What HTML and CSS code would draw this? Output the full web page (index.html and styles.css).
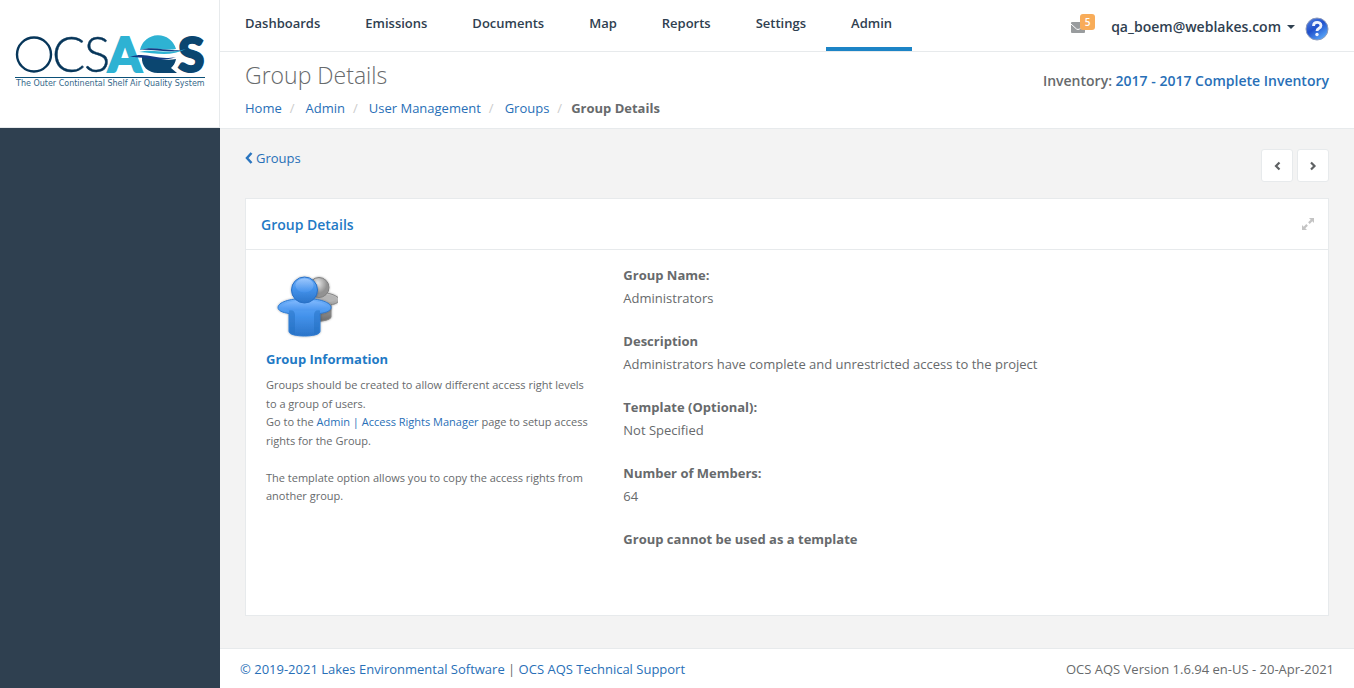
FILE: index.html
```html
<!DOCTYPE html>
<html lang="en-US">
<head>
<meta charset="utf-8">
<meta name="viewport" content="width=device-width, initial-scale=1">
<title>Group Details</title>
<link rel="stylesheet" href="styles.css">
</head>
<body>
<div class="app">
  <aside class="sidebar">
    <div class="brand">
      <svg class="logo" viewBox="0 0 190 56" role="img" aria-label="OCS AQS, The Outer Continental Shelf Air Quality System">
        <circle cx="19" cy="19.500" r="17" fill="none" stroke="#07365a" stroke-width="2.400"/>
        <text class="logo-thin" x="37" y="37">C</text>
        <text class="logo-thin" x="69" y="37">S</text>
        <text class="logo-heavy logo-aqua" x="93" y="37">A</text>
        <text class="logo-heavy" x="163" y="37">S</text>
        <path fill="#2eb2d3" d="M125 15a18.500 18.500 0 0 1 36-1c-12 2-22-3-36 1z"/>
        <path fill="#2eb2d3" d="M124 17c15-4 26 3 47-3-15 8-31 4-47 3z"/>
        <path fill="#0b4670" d="M127 22c13-2 20 5 34 2-1 5-3 7-5 9l6 5h-19c-10 0-17-7-16-16z"/>
        <path fill="#123b85" d="M115 22c17-6 26 4 46 0-15 6-28 0-46 0zM125 15c15-5 28 3 46-1-17 5-30 0-46 1z"/>
        <path stroke="#0b5078" stroke-width="1" d="M0 42.500h190"/>
        <text class="logo-tag" x="1" y="51">The Outer Continental Shelf Air Quality System</text>
      </svg>
    </div>
  </aside>
  <div class="page">
    <header class="topbar">
      <nav class="nav" aria-label="Main">
        <a href="#">Dashboards</a>
        <a href="#">Emissions</a>
        <a href="#">Documents</a>
        <a href="#">Map</a>
        <a href="#">Reports</a>
        <a href="#">Settings</a>
        <a href="#" class="active" aria-current="page">Admin</a>
      </nav>
      <div class="account">
        <a href="#" class="mail" aria-label="5 messages">
          <svg width="14" height="11" viewBox="0 0 14 11"><rect width="14" height="11" rx="1" fill="#999c9e"/><path d="M0 2l5.500 5q1.500 1 3 0L14 2" fill="none" stroke="#fff" stroke-width="1"/></svg>
          <span class="badge">5</span>
        </a>
        <button type="button" class="user">qa_boem@weblakes.com
          <svg width="8" height="4" viewBox="0 0 8 4"><path d="M0 0h8L4 4z" fill="#2f4050"/></svg>
        </button>
        <a href="#" class="help" aria-label="Help">
          <svg width="24" height="24" viewBox="0 0 24 24">
            <defs><linearGradient id="hg" x2=".7" y2="1"><stop offset="0" stop-color="#5a86e0"/><stop offset=".5" stop-color="#1f50cc"/><stop offset="1" stop-color="#5aa8fa"/></linearGradient></defs>
            <circle cx="12" cy="12" r="11" fill="url(#hg)" stroke="#8d9bbb"/>
            <path d="M8.500 9c0-5 7.500-4.500 7.500-.5 0 3-4 2.500-4 5.500" fill="none" stroke="#eef3ff" stroke-width="2.800"/>
            <circle cx="12" cy="17.500" r="1.700" fill="#eef3ff"/>
          </svg>
        </a>
      </div>
    </header>
    <section class="heading">
      <div>
        <h1>Group Details</h1>
        <ol class="crumbs">
          <li><a href="#">Home</a></li>
          <li><a href="#">Admin</a></li>
          <li><a href="#">User Management</a></li>
          <li><a href="#">Groups</a></li>
          <li><strong>Group Details</strong></li>
        </ol>
      </div>
      <p class="inventory">Inventory: <a href="#">2017 - 2017 Complete Inventory</a></p>
    </section>
    <main class="content">
      <div class="tools">
        <a href="#" class="back"><svg width="8" height="12" viewBox="0 0 8 12"><path d="M6.500 1L2 6l4.500 5" fill="none" stroke="#2a75bf" stroke-width="2.500"/></svg>Groups</a>
        <div class="pager">
          <button type="button" aria-label="Previous group"><svg width="8" height="10" viewBox="0 0 8 10"><path d="M6.500 1.500L3 5l3.500 3.500" fill="none" stroke="#5e6163" stroke-width="2.200"/></svg></button>
          <button type="button" aria-label="Next group"><svg width="8" height="10" viewBox="0 0 8 10"><path d="M2 1.500L5.500 5 2 8.500" fill="none" stroke="#5e6163" stroke-width="2.200"/></svg></button>
        </div>
      </div>
      <section class="card">
        <div class="card-head">
          <h2>Group Details</h2>
          <button type="button" class="expand" aria-label="Expand"><svg width="12" height="12" viewBox="0 0 12 12"><path d="M7 0h5v5l-1.700-1.700-2.600 2.600-1.600-1.600 2.600-2.600zM5 12H0V7l1.700 1.700 2.600-2.600 1.600 1.600-2.600 2.600z" fill="#c4c4c4"/></svg></button>
        </div>
        <div class="card-body">
          <div class="info">
            <svg class="people" width="72" height="72" viewBox="0 0 72 72" aria-hidden="true">
              <defs>
                <linearGradient id="b1" x2="0" y2="1"><stop offset="0" stop-color="#70b0fa"/><stop offset=".45" stop-color="#4493ec"/><stop offset="1" stop-color="#2b74c9"/></linearGradient>
                <linearGradient id="b2" x2="0" y2="1"><stop offset="0" stop-color="#b4d4ff"/><stop offset="1" stop-color="#4894ee"/></linearGradient>
                <linearGradient id="b3" x2="0" y2="1"><stop offset="0" stop-color="#86bcff"/><stop offset="1" stop-color="#4894ee"/></linearGradient>
                <linearGradient id="g1" x2="0" y2="1"><stop offset="0" stop-color="#ccc"/><stop offset="1" stop-color="#6c6c6c"/></linearGradient>
                <radialGradient id="g2" cx=".4" cy=".3"><stop offset="0" stop-color="#eee"/><stop offset="1" stop-color="#929292"/></radialGradient>
                <filter id="sh" x="-20%" y="-20%" width="140%" height="140%"><feDropShadow dx="0" dy="0" stdDeviation="1" flood-opacity=".35"/></filter>
              </defs>
              <g transform="translate(1 1.500)">
                <g filter="url(#sh)">
                  <path d="M40 22c12-4 32 1 32 6 0 3-4 5-8 5v13c-2 3-12 5-20 3z" fill="url(#g1)" stroke="#848484"/>
                  <ellipse cx="58" cy="27" rx="11" ry="4" fill="#b5b5b5"/>
                  <circle cx="52" cy="16" r="10" fill="url(#g2)" stroke="#808080"/>
                </g>
                <g filter="url(#sh)">
                  <path d="M11 36c0-5 11-9 26.500-9S64 31 64 36c0 3-4 5-11 6v18c0 6-31 6-31 0V42c-7-1-11-3-11-6z" fill="url(#b1)" stroke="#2f7ad0"/>
                  <path d="M14 36c1-4 11-7 23.500-7S60 32 61 36c-4 2-9 2-12 3H26c-3-1-8-1-12-3z" fill="url(#b3)" opacity=".8"/>
                  <path d="M22 39q6-1 6 5v19l-5-2zM53 39q-6-1-6 5v19l5-2z" fill="#236fc2" opacity=".5"/>
                  <circle cx="37.500" cy="18.500" r="13" fill="url(#b1)" stroke="#2870c6"/>
                  <ellipse cx="37.500" cy="14" rx="9" ry="7" fill="url(#b2)" opacity=".65"/>
                </g>
              </g>
            </svg>
            <h3>Group Information</h3>
            <p>Groups should be created to allow different access right levels to a group of users.<br>Go to the <a href="#">Admin | Access Rights Manager</a> page to setup access rights for the Group.</p>
            <p>The template option allows you to copy the access rights from another group.</p>
          </div>
          <dl class="fields">
            <dt>Group Name:</dt><dd>Administrators</dd>
            <dt>Description</dt><dd>Administrators have complete and unrestricted access to the project</dd>
            <dt>Template (Optional):</dt><dd>Not Specified</dd>
            <dt>Number of Members:</dt><dd>64</dd>
            <dt>Group cannot be used as a template</dt>
          </dl>
        </div>
      </section>
    </main>
    <footer class="footer">
      <div><a href="#">© 2019-2021 Lakes Environmental Software</a> | <a href="#">OCS AQS Technical Support</a></div>
      <div>OCS AQS Version 1.6.94 en-US - 20-Apr-2021</div>
    </footer>
  </div>
</div>
</body>
</html>
```

FILE: styles.css
```css
* { box-sizing: border-box; }
body {
  margin: 0;
  font: 13px/20px "Open Sans", "Noto Sans", sans-serif;
  color: #676a6c;
  background: #f3f3f4;
}
a { color: #286fb7; text-decoration: none; }
h1, h2, h3, p, ol, dl, dd { margin: 0; padding: 0; }
button { font: inherit; color: inherit; background: none; border: 0; padding: 0; cursor: pointer; }
svg { display: block; }

.app { display: flex; min-height: 100vh; }
.sidebar { flex: 0 0 220px; background: #2f4050; }
.brand {
  height: 128px;
  padding: 35px 14px 0 15px;
  background: #fff;
  border: solid #e7eaec;
  border-width: 0 1px 1px 0;
}
.logo { width: 100%; overflow: visible; }
.logo-thin { font: 300 49px Lato, sans-serif; fill: #07365a; stroke: #07365a; stroke-width: 0.4; }
.logo-heavy { font: 900 48px Lato, sans-serif; fill: #0b4670; stroke: #0b4670; stroke-width: 2; }
.logo-aqua { fill: #2eb2d3; stroke: #2eb2d3; }
.logo-tag { font: 400 8px "DejaVu Sans", sans-serif; fill: #35688a; }

.page { flex: 1; min-width: 0; display: flex; flex-direction: column; background: #f3f3f3; }
.topbar {
  display: flex;
  justify-content: space-between;
  height: 52px;
  background: #fff;
  border-bottom: 1px solid #e7eaec;
}
.nav { display: flex; }
.nav a {
  padding: 13px 20px 0 25px;
  font-weight: 600;
  color: #2f4050;
  border-bottom: 4px solid transparent;
}
.nav .active { border-color: #1c84c6; }
.account { display: flex; align-items: flex-start; padding: 17px 25px 0 0; }
.mail { position: relative; width: 24px; margin-right: 16px; padding-top: 5px; }
.badge {
  position: absolute;
  right: 0;
  top: -3px;
  width: 15px;
  height: 16px;
  border-radius: 3px;
  background: #f8ac59;
  color: #fff;
  font: 600 10px/16px "Open Sans", sans-serif;
  text-align: center;
}
.user {
  display: flex;
  align-items: center;
  gap: 6px;
  margin-right: 10px;
  font-size: 14px;
  font-weight: 600;
  color: #2f4050;
}

.heading {
  display: flex;
  justify-content: space-between;
  padding: 9px 25px 10px;
  background: #fff;
  border-bottom: 1px solid #e7eaec;
}
.heading h1 { font-size: 23px; line-height: 28px; font-weight: 300; }
.crumbs { display: flex; list-style: none; margin-top: 9px; }
.crumbs li + li::before { content: "/"; padding: 0 11px 0 8px; color: #ccc; }
.crumbs li:last-child::before { padding-right: 9px; }
.inventory { padding-top: 10px; font-size: 14px; font-weight: 600; }

.content { flex: 1; padding: 20px 25px 32px; display: flex; flex-direction: column; }
.tools { display: flex; justify-content: space-between; margin-bottom: 16px; }
.back { display: flex; align-items: center; gap: 3px; height: 18px; }
.pager { display: flex; gap: 4px; }
.pager button {
  display: grid;
  place-items: center;
  width: 32px;
  height: 33px;
  background: #fff;
  border: 1px solid #e7eaec;
  border-radius: 3px;
}
.card { flex: 1; background: #fff; border: 1px solid #e7eaec; }
.card-head {
  display: flex;
  justify-content: space-between;
  align-items: flex-start;
  height: 51px;
  padding: 16px 14px 0 15px;
  border-bottom: 1px solid #e7eaec;
}
.card-head h2 { font-size: 14px; line-height: 20px; font-weight: 600; color: #1f7ac5; }
.expand { padding-top: 3px; }
.card-body { display: flex; padding: 15px 5px; }
.info { flex: 0 0 33.333%; padding: 5px 15px 0; font-size: 11px; line-height: 1.7; }
.info h3 { margin: 7px 0; font-size: 13px; line-height: 20px; color: #1f7ac5; }
.info p + p { margin-top: 18px; }
.fields { flex: 1; padding: 0 15px; }
.fields dt { font-weight: 700; }
.fields dd { margin: 3px 0 23px; }

.footer {
  display: flex;
  justify-content: space-between;
  padding: 10px 20px 9px;
  background: #fff;
  border-top: 1px solid #e7eaec;
}
```
